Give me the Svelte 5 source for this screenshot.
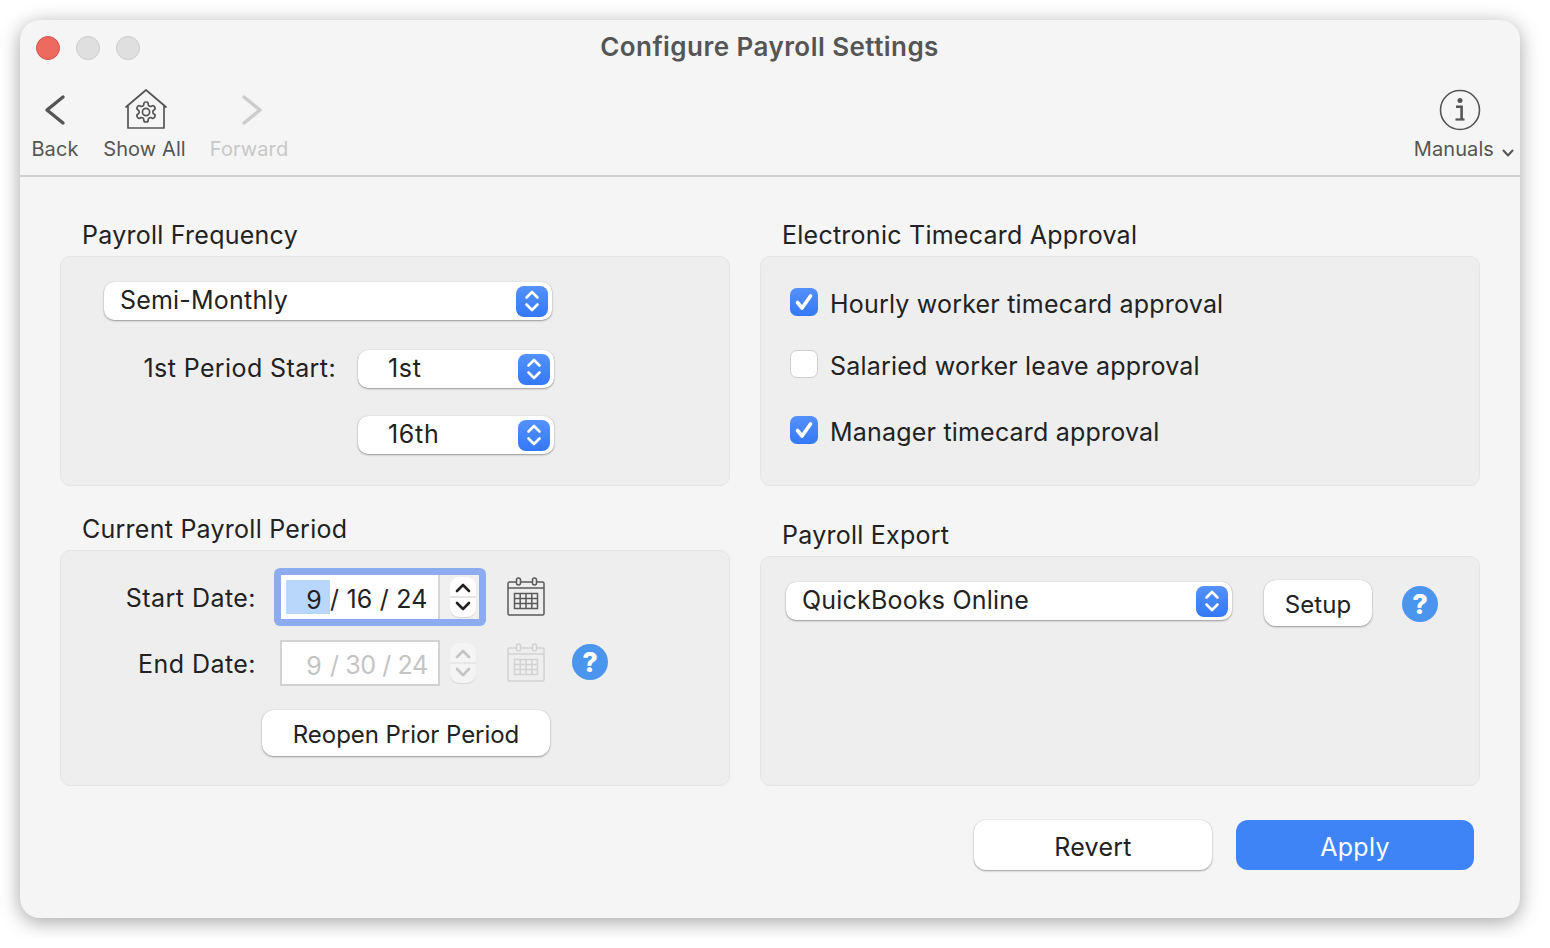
<script>
	let hourly = $state(true);
	let salaried = $state(false);
	let manager = $state(true);
</script>

{#snippet updown(cls)}
	<span class="updown {cls}">
		<svg width="20" height="26" viewBox="0 0 20 26" fill="none" stroke="#fff" stroke-width="2.6" stroke-linecap="round" stroke-linejoin="round">
			<path d="M4.5 9.5 10 4l5.5 5.5M4.5 16.5 10 22l5.5-5.5" />
		</svg>
	</span>
{/snippet}

{#snippet stepper(off)}
	<span class="stepper" class:off>
		<svg width="26" height="40" viewBox="0 0 26 40" fill="none" stroke={off ? "#c4c4c4" : "#222"} stroke-width="2.6" stroke-linecap="round" stroke-linejoin="round">
			<path d="M7 14l6-6 6 6M7 26l6 6 6-6" />
			<path d="M0 20h26" stroke={off ? "#e4e4e4" : "#ddd"} stroke-width="1.5" />
		</svg>
	</span>
{/snippet}

{#snippet calendar(off)}
	<svg class="cal" width="38" height="40" viewBox="0 0 38 40" fill="none" stroke={off ? "#d2d2d2" : "#5a5a5a"} stroke-width="1.5">
		<rect x="1" y="5" width="36" height="33" rx="1.5" />
		<path d="M1 11h36" />
		<rect x="9.5" y="1" width="4" height="7" rx="2" fill="#eee" />
		<rect x="25.5" y="1" width="4" height="7" rx="2" fill="#eee" />
		<path d="M7.5 16.5h23v15h-23zM7.5 21.5h23M7.5 26.5h23M13.2 16.5v15M19 16.5v15M24.8 16.5v15" />
	</svg>
{/snippet}

{#snippet help()}
	<span class="help">?</span>
{/snippet}

{#snippet check(on)}
	<span class="box" class:on>
		{#if on}
			<svg width="28" height="28" viewBox="0 0 28 28" fill="none" stroke="#fff" stroke-width="3.6" stroke-linecap="round" stroke-linejoin="round">
				<path d="M7.5 14.5l4.5 5.5 8.5-12" />
			</svg>
		{/if}
	</span>
{/snippet}

<div class="window">
	<header class="titlebar">
		<div class="lights">
			<span class="light red"></span>
			<span class="light"></span>
			<span class="light"></span>
		</div>
		<h1>Configure Payroll Settings</h1>
	</header>

	<nav class="toolbar">
		<button type="button" class="tool back">
			<svg width="42" height="42" viewBox="0 0 42 42" fill="none" stroke="#555" stroke-width="3.4" stroke-linecap="round" stroke-linejoin="round">
				<path d="M29 8 13 21l16 13" />
			</svg>
			<span>Back</span>
		</button>
		<button type="button" class="tool showall">
			<svg width="42" height="42" viewBox="0 0 42 42" fill="none" stroke="#555" stroke-width="1.7" stroke-linejoin="round">
				<path d="M1 18 21 1l20 17M3 16.5V39h36V16.5" stroke-linecap="round" />
				<g transform="translate(9 11)">
					<path d="M12.22 2h-.44a2 2 0 0 0-2 2v.18a2 2 0 0 1-1 1.73l-.43.25a2 2 0 0 1-2 0l-.15-.08a2 2 0 0 0-2.73.73l-.22.38a2 2 0 0 0 .73 2.73l.15.1a2 2 0 0 1 1 1.72v.51a2 2 0 0 1-1 1.74l-.15.09a2 2 0 0 0-.73 2.73l.22.38a2 2 0 0 0 2.73.73l.15-.08a2 2 0 0 1 2 0l.43.25a2 2 0 0 1 1 1.73V20a2 2 0 0 0 2 2h.44a2 2 0 0 0 2-2v-.18a2 2 0 0 1 1-1.73l.43-.25a2 2 0 0 1 2 0l.15.08a2 2 0 0 0 2.73-.73l.22-.39a2 2 0 0 0-.73-2.73l-.15-.08a2 2 0 0 1-1-1.74v-.5a2 2 0 0 1 1-1.74l.15-.09a2 2 0 0 0 .73-2.73l-.22-.38a2 2 0 0 0-2.73-.73l-.15.08a2 2 0 0 1-2 0l-.43-.25a2 2 0 0 1-1-1.73V4a2 2 0 0 0-2-2z" />
					<circle cx="12" cy="12" r="3.6" />
				</g>
			</svg>
			<span>Show All</span>
		</button>
		<button type="button" class="tool forward" disabled>
			<svg width="42" height="42" viewBox="0 0 42 42" fill="none" stroke="#ccc" stroke-width="3.4" stroke-linecap="round" stroke-linejoin="round">
				<path d="M16 8l16 13-16 13" />
			</svg>
			<span>Forward</span>
		</button>
		<button type="button" class="tool manuals">
			<svg width="42" height="42" viewBox="0 0 42 42" fill="none" stroke="#555" stroke-width="1.6">
				<circle cx="21" cy="21" r="19.5" />
				<circle cx="21" cy="11.5" r="2.5" fill="#555" stroke="none" />
				<path d="M17 17.7h5.6V30" stroke-width="2.6" />
				<path d="M16.5 30.5h9" stroke-width="2.2" />
			</svg>
			<span class="manuals-label">Manuals
				<svg width="12" height="8" viewBox="0 0 12 8" fill="none" stroke="#555" stroke-width="2" stroke-linecap="round" stroke-linejoin="round">
					<path d="M1.5 1.5 6 6.5l4.5-5" />
				</svg>
			</span>
		</button>
	</nav>

	<main class="content">
		<div class="column">
			<h2>Payroll Frequency</h2>
			<section class="group freq">
				<div class="select wide">Semi-Monthly {@render updown("")}</div>
				<div class="freq-row first">
					<span class="field-label">1st Period Start:</span>
					<div class="select small">1st {@render updown("")}</div>
				</div>
				<div class="freq-row">
					<span class="field-label"></span>
					<div class="select small">16th {@render updown("")}</div>
				</div>
			</section>

			<h2 class="second">Current Payroll Period</h2>
			<section class="group period">
				<div class="date-row">
					<span class="date-label">Start Date:</span>
					<div class="date-ctl focused">
						<div class="date-field"><span class="seg-hi">9</span><span class="rest">/ 16 / 24</span></div>
						{@render stepper(false)}
					</div>
					{@render calendar(false)}
				</div>
				<div class="date-row end">
					<span class="date-label">End Date:</span>
					<div class="date-ctl">
						<div class="date-field off"><span class="seg">9</span><span class="rest">/ 30 / 24</span></div>
						{@render stepper(true)}
					</div>
					{@render calendar(true)}
					{@render help()}
				</div>
				<button type="button" class="btn reopen">Reopen Prior Period</button>
			</section>
		</div>

		<div class="column">
			<h2>Electronic Timecard Approval</h2>
			<section class="group approval">
				<!-- svelte-ignore a11y_click_events_have_key_events -->
				<!-- svelte-ignore a11y_no_static_element_interactions -->
				<div class="check-row" onclick={() => (hourly = !hourly)}>{@render check(hourly)}<span>Hourly worker timecard approval</span></div>
				<!-- svelte-ignore a11y_click_events_have_key_events -->
				<!-- svelte-ignore a11y_no_static_element_interactions -->
				<div class="check-row r2" onclick={() => (salaried = !salaried)}>{@render check(salaried)}<span>Salaried worker leave approval</span></div>
				<!-- svelte-ignore a11y_click_events_have_key_events -->
				<!-- svelte-ignore a11y_no_static_element_interactions -->
				<div class="check-row r3" onclick={() => (manager = !manager)}>{@render check(manager)}<span>Manager timecard approval</span></div>
			</section>

			<h2 class="second export">Payroll Export</h2>
			<section class="group export-box">
				<div class="select qb">QuickBooks Online {@render updown("")}</div>
				<button type="button" class="btn setup">Setup</button>
				{@render help()}
			</section>
		</div>
	</main>

	<footer class="actions">
		<button type="button" class="btn big">Revert</button>
		<button type="button" class="btn big primary">Apply</button>
	</footer>
</div>

<style>
	:global(body) {
		background: #fff;
		font-family: Inter, "Liberation Sans", sans-serif;
	}

	.window {
		box-sizing: border-box;
		width: 1500px;
		height: 898px;
		margin: 20px;
		border-radius: 20px;
		background: #f5f5f5;
		box-shadow: 0 4px 20px rgba(0, 0, 0, 0.36);
		color: #222;
	}

	.titlebar {
		position: relative;
		height: 56px;
		display: flex;
		align-items: center;
		justify-content: center;
	}

	.lights {
		position: absolute;
		left: 16px;
		top: 16px;
		display: flex;
		gap: 16px;
	}

	.light {
		box-sizing: border-box;
		width: 24px;
		height: 24px;
		border-radius: 50%;
		background: #dfdfdf;
		border: 1px solid #cbcbcb;
	}

	.light.red {
		background: #ec6a5e;
		border-color: #d6564b;
	}

	h1 {
		margin: 0 1px 0 0;
		padding-bottom: 4px;
		font-size: 26px;
		font-weight: 600;
		letter-spacing: 0.45px;
		color: #555;
	}

	.toolbar {
		box-sizing: border-box;
		height: 101px;
		padding: 13px 6px 0 12px;
		display: flex;
		border-bottom: 2px solid #cfcfcf;
	}

	.tool {
		display: flex;
		flex-direction: column;
		align-items: center;
		gap: 6px;
		padding: 0;
		border: 0;
		background: none;
		font: inherit;
		font-size: 20px;
		line-height: 24px;
		letter-spacing: 0.1px;
		color: #555;
		white-space: nowrap;
	}

	.tool svg {
		display: block;
		flex: none;
	}

	.back {
		width: 46px;
	}

	.showall {
		width: 81px;
		margin-left: 26px;
	}

	.showall > svg {
		margin-left: 2px;
	}

	.forward {
		width: 78px;
		margin-left: 25px;
		color: #c8c8c8;
	}

	.manuals {
		margin-left: auto;
		align-items: flex-start;
	}

	.manuals > svg {
		margin-left: 25px;
	}

	.manuals-label {
		display: flex;
		align-items: center;
		gap: 8px;
	}

	.manuals-label svg {
		margin-top: 7px;
	}

	.content {
		padding: 43px 40px 0;
		display: grid;
		grid-template-columns: 670px 720px;
		column-gap: 30px;
	}

	h2 {
		margin: 0 0 6px 22px;
		font-size: 25px;
		line-height: 30px;
		font-weight: 400;
		letter-spacing: 0.25px;
	}

	h2.second {
		margin-top: 28px;
	}

	h2.export {
		margin-top: 34px;
	}

	.group {
		box-sizing: border-box;
		background: #eee;
		border: 1px solid #e5e5e5;
		border-radius: 10px;
		font-size: 25px;
		letter-spacing: 0.2px;
	}

	.freq {
		height: 230px;
		padding: 25px 0 0 43px;
	}

	.select {
		box-sizing: border-box;
		height: 38px;
		padding-bottom: 2px;
		display: flex;
		align-items: center;
		justify-content: space-between;
		background: #fff;
		border-radius: 10px;
		box-shadow: 0 1px 2px rgba(0, 0, 0, 0.35), 0 0 1px rgba(0, 0, 0, 0.2);
		font-size: 25px;
	}

	.wide {
		width: 448px;
		padding-left: 16px;
		padding-right: 4px;
	}

	.small {
		width: 196px;
		padding-left: 30px;
		padding-right: 4px;
		letter-spacing: 0.7px;
	}

	.updown {
		width: 32px;
		height: 31px;
		margin-bottom: -2px;
		display: flex;
		align-items: center;
		justify-content: center;
		border-radius: 8px;
		background: linear-gradient(#5491fb, #3478f6);
	}

	.freq-row {
		display: flex;
		align-items: center;
		margin-top: 28px;
	}

	.freq-row.first {
		margin-top: 30px;
	}

	.field-label {
		width: 232px;
		margin-right: 22px;
		padding-bottom: 2px;
		text-align: right;
		letter-spacing: 0.4px;
	}

	.period {
		height: 236px;
		padding-top: 17px;
	}

	.date-row {
		display: flex;
		align-items: center;
	}

	.date-row.end {
		margin-top: 8px;
	}

	.date-label {
		width: 195px;
		padding-top: 2px;
		text-align: right;
		letter-spacing: 0.45px;
	}

	.date-ctl {
		box-sizing: border-box;
		width: 212px;
		height: 58px;
		margin-left: 18px;
		padding: 7px 10px 7px 6px;
		display: flex;
		align-items: center;
		justify-content: space-between;
		border-radius: 6px;
	}

	.date-ctl.focused {
		padding-left: 7px;
		box-shadow: inset 0 0 0 7px #8dacef;
		background-color: #f0f0f0;
	}

	.date-field {
		box-sizing: border-box;
		width: 159px;
		height: 44px;
		display: flex;
		align-items: center;
		padding-left: 5px;
		background: #fff;
		border-right: 2px solid #d6d6d6;
		white-space: pre;
	}

	.date-field.off {
		width: 160px;
		height: 46px;
		border: 2px solid #d2d2d2;
		padding-left: 4px;
		color: #c4c4c4;
	}

	.rest {
		padding-top: 4px;
	}

	.off .rest {
		letter-spacing: -0.4px;
	}

	.seg-hi,
	.seg {
		box-sizing: border-box;
		width: 44px;
		height: 34px;
		padding-right: 8px;
		text-align: right;
		line-height: 40px;
	}

	.seg-hi {
		background: #b9d6fb;
	}

	.stepper {
		width: 26px;
		height: 40px;
		background: #fff;
		border-radius: 9px;
		box-shadow: 0 1px 1px rgba(0, 0, 0, 0.1);
	}

	.stepper.off {
		background: #f4f4f4;
	}

	.stepper svg {
		display: block;
	}

	.cal {
		margin-left: 21px;
		flex: none;
	}

	.help {
		flex: none;
		width: 36px;
		height: 36px;
		display: flex;
		align-items: center;
		justify-content: center;
		border-radius: 50%;
		background: #4a95ee;
		color: #fff;
		font-size: 27px;
		font-weight: 800;
		letter-spacing: 0;
	}

	.end .help {
		margin: -2px 0 0 27px;
	}

	.btn {
		box-sizing: border-box;
		padding: 2px 0 0;
		border: 0;
		background: #fff;
		border-radius: 12px;
		box-shadow: 0 1px 2px rgba(0, 0, 0, 0.35), 0 0 1px rgba(0, 0, 0, 0.2);
		font: inherit;
		font-size: 24px;
		letter-spacing: 0.1px;
		color: #222;
	}

	.reopen {
		display: block;
		width: 288px;
		height: 46px;
		margin: 18px 0 0 201px;
		letter-spacing: -0.05px;
	}

	.approval {
		height: 230px;
		padding: 31px 0 0 29px;
	}

	.check-row {
		display: flex;
		gap: 12px;
		height: 28px;
		line-height: 32px;
		cursor: default;
	}

	.r2 {
		margin-top: 34px;
	}

	.r3 {
		margin-top: 38px;
	}

	.box {
		box-sizing: border-box;
		width: 28px;
		height: 28px;
		flex: none;
		background: #fff;
		border: 1px solid #cfcfcf;
		border-radius: 7px;
	}

	.box.on {
		border: 0;
		background: linear-gradient(#5491fb, #3478f6);
	}

	.box svg {
		display: block;
	}

	.export-box {
		height: 230px;
		padding: 23px 0 0 25px;
		display: flex;
		align-items: flex-start;
	}

	.qb {
		width: 446px;
		margin-top: 2px;
		padding-left: 16px;
		padding-right: 4px;
	}

	.setup {
		width: 108px;
		height: 46px;
		margin-left: 32px;
	}

	.export-box .help {
		margin: 6px 0 0 30px;
	}

	.actions {
		padding: 34px 46px 0 0;
		display: flex;
		justify-content: flex-end;
		gap: 24px;
	}

	.big {
		width: 238px;
		height: 50px;
		padding-top: 4px;
		font-size: 25px;
		letter-spacing: 0.3px;
	}

	.primary {
		background: #3e84f7;
		color: #fff;
		box-shadow: none;
	}
</style>
